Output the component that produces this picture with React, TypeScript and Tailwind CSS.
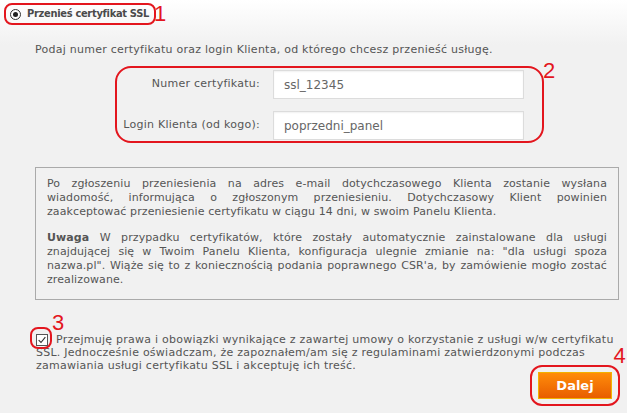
import React from "react"

const RED = "border-[#e3161e]"

function Num({ n, className }: { n: string; className: string }) {
  return (
    <span
      className={`absolute text-[22px] leading-none text-[#e3161e] font-['Liberation_Sans',sans-serif] ${className}`}
    >
      {n}
    </span>
  )
}

// lines kept as in the original page, each justified to full width except the last
function Justified({ lines }: { lines: React.ReactNode[] }) {
  return (
    <>
      {lines.map((l, i) => (
        <span
          key={i}
          className={
            i < lines.length - 1
              ? "block whitespace-nowrap text-justify [text-align-last:justify]"
              : "block whitespace-nowrap"
          }
        >
          {l}
        </span>
      ))}
    </>
  )
}

export default function App() {
  return (
    <div className="relative w-[627px] h-[413px] overflow-hidden bg-[linear-gradient(#ffffff,#f1f1f1_45px)] font-['DejaVu_Sans',sans-serif] text-[11px] tracking-[0.25px] text-[#555]">
      {/* 1 */}
      <div className="relative pt-[3px] pl-[4px]">
        <div className={`inline-flex h-[22px] items-center gap-[6px] rounded-[8px] border-2 ${RED} pl-[4px] pr-[5px]`}>
          <span className="flex h-[11px] w-[11px] items-center justify-center rounded-full border border-[#333] bg-white">
            <span className="h-[5px] w-[5px] rounded-full bg-[#222]" />
          </span>
          <span className="font-['DejaVu_Sans_Condensed',sans-serif] text-[11px] font-bold tracking-[-0.3px] text-[#4a4a4a]">
            Przenieś certyfikat SSL
          </span>
        </div>
        <Num n="1" className="left-[154px] top-[3px]" />
      </div>

      <p className="mt-[18px] pl-[35px] leading-[14px]">
        Podaj numer certyfikatu oraz login Klienta, od którego chcesz przenieść usługę.
      </p>

      {/* 2 */}
      <div className="relative mt-[9px] ml-[115px] w-[429px]">
        <div className={`flex h-[77px] flex-col gap-[12px] rounded-[16px] border-2 ${RED} pt-[2px]`}>
          {[
            ["Numer certyfikatu:", "ssl_12345"],
            ["Login Klienta (od kogo):", "poprzedni_panel"],
          ].map(([label, value]) => (
            <div key={label} className="flex items-center gap-[13px]">
              <label className="w-[143px] whitespace-nowrap text-right">{label}</label>
              <div className="flex h-[29px] w-[251px] items-center border border-[#dcdcdc] bg-white pl-[10px] text-[12px] tracking-normal text-[#666] shadow-[inset_0_1px_2px_rgba(0,0,0,0.06)]">
                {value}
              </div>
            </div>
          ))}
        </div>
        <Num n="2" className="left-[428px] top-[-6px]" />
      </div>

      <div className="mt-[24px] ml-[35px] h-[133px] w-[584px] border border-[#aaa] px-[11px] pt-[9px] leading-[14px] tracking-[0.1px]">
        <p>
          <Justified
            lines={[
              "Po zgłoszeniu przeniesienia na adres e-mail dotychczasowego Klienta zostanie wysłana",
              "wiadomość, informująca o zgłoszonym przeniesieniu. Dotychczasowy Klient powinien",
              "zaakceptować przeniesienie certyfikatu w ciągu 14 dni, w swoim Panelu Klienta.",
            ]}
          />
        </p>
        <p className="mt-[12px]">
          <Justified
            lines={[
              <>
                <b>Uwaga</b> W przypadku certyfikatów, które zostały automatycznie zainstalowane dla usługi
              </>,
              'znajdującej się w Twoim Panelu Klienta, konfiguracja ulegnie zmianie na: "dla usługi spoza',
              "nazwa.pl\". Wiąże się to z koniecznością podania poprawnego CSR'a, by zamówienie mogło zostać",
              "zrealizowane.",
            ]}
          />
        </p>
      </div>

      {/* 3 */}
      <div className="relative mt-[32px] ml-[36px] w-[590px] leading-[13px]">
        <span className={`absolute left-[-6px] top-[-5px] h-[22px] w-[22px] rounded-[8px] border-2 ${RED}`} />
        <Num n="3" className="left-[16px] top-[-20px]" />
        <p className="whitespace-nowrap">
          <span className="mr-[8px] inline-flex h-[12px] w-[12px] translate-y-[2px] items-center justify-center border border-[#555] bg-white align-baseline">
            <svg viewBox="0 0 12 12" className="h-[10px] w-[10px]">
              <path d="M2 6.2 L4.8 9 L10 2.5" fill="none" stroke="#333" strokeWidth="1.4" />
            </svg>
          </span>
          Przejmuję prawa i obowiązki wynikające z zawartej umowy o korzystanie z usługi w/w certyfikatu
          <br />
          SSL. Jednocześnie oświadczam, że zapoznałem/am się z regulaminami zatwierdzonymi podczas
          <br />
          zamawiania usługi certyfikatu SSL i akceptuję ich treść.
        </p>
      </div>

      {/* 4 */}
      <div className="relative mt-[-7px] flex justify-end pr-[7px]">
        <div className={`rounded-[12px] border-2 ${RED} px-[6px] py-[5px]`}>
          <button
            type="button"
            className="h-[27px] w-[74px] border border-[#f3b100] bg-[linear-gradient(#ff8c0a,#e85d00)] text-[13px] font-bold tracking-normal text-white"
          >
            Dalej
          </button>
        </div>
        <Num n="4" className="right-[1px] top-[-20px]" />
      </div>
    </div>
  )
}
